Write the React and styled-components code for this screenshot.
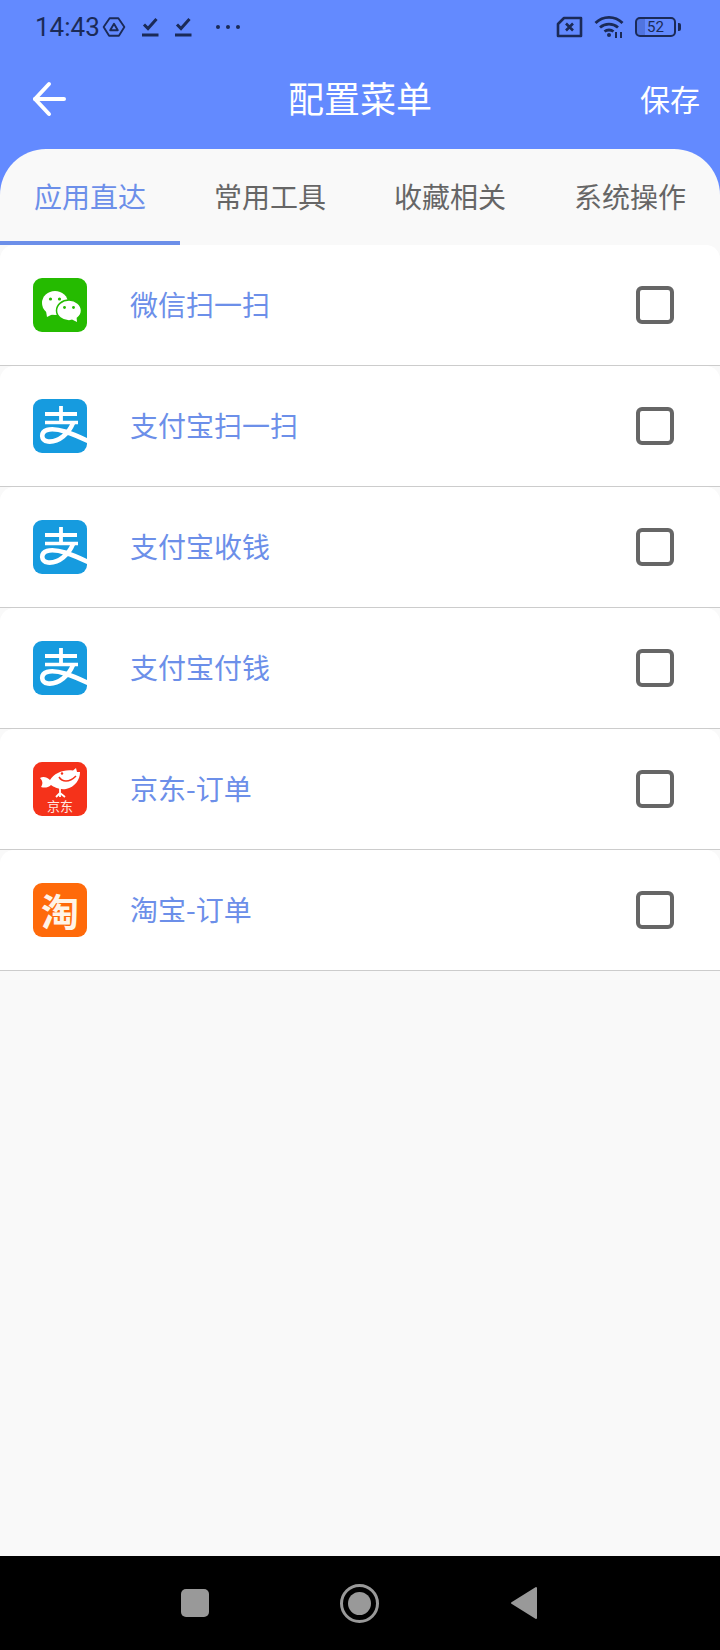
import React from "react";
import styled, { createGlobalStyle } from "styled-components";

const GlobalStyle = createGlobalStyle`
  html, body {
    margin: 0;
    padding: 0;
    background: #000;
  }
  * {
    box-sizing: border-box;
  }
`;

const cjk = `"Noto Sans CJK SC", "Noto Sans", sans-serif`;

const Page = styled.div`
  width: 720px;
  height: 1650px;
  display: flex;
  flex-direction: column;
  background: #638aff;
  font-family: ${cjk};
  overflow: hidden;
`;

const StatusBar = styled.div`
  height: 54px;
  flex-shrink: 0;
  padding: 0 44px 0 35px;
  display: flex;
  align-items: center;
  color: #1b2a57;

  svg {
    display: block;
    flex-shrink: 0;
  }
`;

const Clock = styled.span`
  font-family: Roboto, sans-serif;
  font-size: 26px;
  margin-right: 2px;
`;

const StatusLeft = styled.div`
  display: flex;
  align-items: center;
  gap: 15px;
  flex: 1;
`;

const StatusGroup = styled.div`
  display: flex;
  align-items: center;
  gap: ${(p) => p.$gap}px;
`;

const Battery = styled.div`
  width: 41px;
  height: 20px;
  border: 2px solid #1b2a57;
  border-radius: 5px;
  font-family: Roboto, sans-serif;
  font-size: 15px;
  line-height: 16px;
  text-align: center;
  position: relative;
  background: linear-gradient(90deg, #5074e0 0, #5074e0 8px, transparent 8px);

  &::after {
    content: "";
    position: absolute;
    right: -7px;
    top: 4px;
    width: 3px;
    height: 8px;
    border-radius: 0 2px 2px 0;
    background: #1b2a57;
  }
`;

const Header = styled.div`
  height: 95px;
  flex-shrink: 0;
  padding: 0 20px 6px 32px;
  display: grid;
  grid-template-columns: 78px 1fr 80px;
  align-items: center;
  color: #fff;
`;

const BackButton = styled.div`
  display: flex;
  align-items: center;
`;

const Title = styled.div`
  font-size: 36px;
  text-align: center;
  line-height: 1;
  padding: 0 10px 4px 0;
`;

const Save = styled.div`
  font-size: 30px;
  text-align: right;
  line-height: 1;
  padding-bottom: 2px;
`;

const Sheet = styled.div`
  flex: 1;
  background: #f9f9f9;
  border-radius: 46px 46px 0 0;
  display: flex;
  flex-direction: column;
`;

const Tabs = styled.div`
  height: 96px;
  flex-shrink: 0;
  display: grid;
  grid-template-columns: repeat(4, 180px);
`;

const Tab = styled.div`
  display: flex;
  align-items: center;
  justify-content: center;
  padding-top: 1px;
  font-size: 28px;
  color: ${(p) => (p.$active ? "#6c8fe9" : "#666")};
  border-bottom: 4px solid ${(p) => (p.$active ? "#6c8fe9" : "transparent")};
`;

const Row = styled.div`
  height: 121px;
  background: #fff;
  border-radius: 14px 14px 0 0;
  border-bottom: 1px solid #ccc;
  padding: 0 46px 0 33px;
  display: flex;
  align-items: center;
`;

const Logo = styled.div`
  width: 54px;
  height: 54px;
  flex-shrink: 0;
  border-radius: 9px;
  overflow: hidden;
  background: ${(p) => p.$bg};
  display: flex;
  align-items: center;
  justify-content: center;
  color: #fff;

  svg {
    display: block;
  }
`;

const TaobaoMark = styled.span`
  font-size: 38px;
  font-weight: 700;
  line-height: 1;
  color: #fff4e8;
`;

const JdWord = styled.text`
  font-family: ${cjk};
  font-size: 13px;
  fill: #ffe9e2;
`;

const RowLabel = styled.div`
  flex: 1;
  margin-left: 43px;
  padding-bottom: 2px;
  font-size: 28px;
  color: #6c8fe9;
  line-height: 1;
`;

const Check = styled.div`
  width: 38px;
  height: 38px;
  border: 4px solid #666;
  border-radius: 6px;
  background: #fff;
`;

const NavBar = styled.div`
  height: 94px;
  flex-shrink: 0;
  background: #000;
  padding-right: 2px;
  display: flex;
  align-items: center;
  justify-content: center;
  gap: 131px;
`;

const NavSquare = styled.div`
  width: 28px;
  height: 28px;
  border-radius: 5px;
  background: #999;
`;

const NavCircle = styled.div`
  width: 39px;
  height: 39px;
  border-radius: 50%;
  border: 3px solid #999;
  display: flex;
  align-items: center;
  justify-content: center;

  &::before {
    content: "";
    width: 23px;
    height: 23px;
    border-radius: 50%;
    background: #999;
  }
`;

const WechatLogo = () => (
  <svg width="54" height="54" viewBox="0 0 54 54">
    <ellipse cx="22" cy="25" rx="13" ry="12" fill="#fff" />
    <path d="M13 33 L14 39 L22 35 Z" fill="#fff" />
    <ellipse cx="36" cy="32.5" rx="12.5" ry="10.5" fill="#fff" stroke="#25bb00" strokeWidth="1.5" />
    <path d="M39 41.5 L44 44 L43.5 38.5 Z" fill="#fff" />
    <circle cx="17.5" cy="21" r="1.6" fill="#25bb00" />
    <circle cx="26.5" cy="21" r="1.6" fill="#25bb00" />
    <circle cx="31.5" cy="29.5" r="1.4" fill="#25bb00" />
    <circle cx="40.5" cy="29.5" r="1.4" fill="#25bb00" />
  </svg>
);

const AlipayLogo = () => (
  <svg width="54" height="54" viewBox="0 0 54 54" fill="none" stroke="#fff" strokeWidth="3.8">
    <path d="M12 15 H44" />
    <path d="M28 7 V23" />
    <path d="M12 23.5 H45" strokeWidth="3.4" />
    <path d="M40 24 C36 34 26 43.5 15 42.5 C7.5 41.5 7.5 33 14 31 C24 28 40 35 56 42.5" strokeWidth="4.6" />
  </svg>
);

const JdLogo = () => (
  <svg width="54" height="54" viewBox="0 0 54 54">
    <path
      d="M7 16 C10 14 14 15 17 18 C21 11 31 7 40 8.5 L43 6 L44 10 L47 10 C47 18 42 25 33 27 C26 28 21 25 18 23 C15 26 11 26 8 25 C10 22 10 19 7 16 Z"
      fill="#fff"
    />
    <path d="M27 26 V31 M27 31 L23 35 M27 31 L32 35 M27 31 V35" stroke="#fff" strokeWidth="1.8" fill="none" />
    <path d="M26 15 C29 20 36 21 43 14" stroke="#f5321a" strokeWidth="1.5" fill="none" />
    <circle cx="29" cy="11.5" r="1.2" fill="#f5321a" />
    <JdWord x="14" y="48.5">京东</JdWord>
  </svg>
);

const items = [
  { key: "wx", label: "微信扫一扫", logo: "wechat" },
  { key: "ali-scan", label: "支付宝扫一扫", logo: "alipay" },
  { key: "ali-get", label: "支付宝收钱", logo: "alipay" },
  { key: "ali-pay", label: "支付宝付钱", logo: "alipay" },
  { key: "jd", label: "京东-订单", logo: "jd" },
  { key: "tb", label: "淘宝-订单", logo: "taobao" },
];

const logos = {
  wechat: (
    <Logo $bg="#25bb00">
      <WechatLogo />
    </Logo>
  ),
  alipay: (
    <Logo $bg="#169bdf">
      <AlipayLogo />
    </Logo>
  ),
  jd: (
    <Logo $bg="#f5321a">
      <JdLogo />
    </Logo>
  ),
  taobao: (
    <Logo $bg="#ff6a0a">
      <TaobaoMark>淘</TaobaoMark>
    </Logo>
  ),
};

const tabs = ["应用直达", "常用工具", "收藏相关", "系统操作"];

const TaskCheck = () => (
  <svg width="18" height="20" viewBox="0 0 18 20" fill="none" stroke="#1b2a57">
    <path d="M3 7.5 L7 11.5 L15.5 2" strokeWidth="3" />
    <path d="M1 18 H17.5" strokeWidth="3" />
  </svg>
);

export default function App() {
  return (
    <Page>
      <GlobalStyle />
      <StatusBar>
        <StatusLeft>
          <StatusGroup $gap={0}>
            <Clock>14:43</Clock>
            <svg width="24" height="22" viewBox="0 0 22 20" fill="none" stroke="#1b2a57" strokeWidth="1.7">
              <path d="M7 2 H15 L20.5 10 L15.5 18 H6.5 L1.5 10 Z" strokeLinejoin="round" />
              <path d="M11 7 L14.5 13 H7.5 Z" strokeLinejoin="round" />
            </svg>
          </StatusGroup>
          <TaskCheck />
          <TaskCheck />
          <svg width="26" height="6" viewBox="0 0 26 6" fill="#1b2a57" style={{ marginLeft: 8 }}>
            <circle cx="3" cy="3" r="2" />
            <circle cx="13" cy="3" r="2" />
            <circle cx="23" cy="3" r="2" />
          </svg>
        </StatusLeft>
        <StatusGroup $gap={11}>
          <svg width="27" height="22" viewBox="0 0 27 22" fill="none" stroke="#1b2a57">
            <path d="M8 2 H25 V20 H2 V8 Z" strokeWidth="2.6" strokeLinejoin="round" />
            <path d="M10 7.5 L17 14.5 M17 7.5 L10 14.5" strokeWidth="2.6" />
          </svg>
          <svg width="30" height="24" viewBox="0 0 30 24" fill="none" stroke="#1b2a57" strokeWidth="2.8">
            <path d="M1.5 8 C9 0.5 21 0.5 28.5 8" />
            <path d="M6 12.5 C11 8 19 8 24 12.5" />
            <path d="M10.5 16.5 C13 14.5 17 14.5 19.5 16.5" />
            <circle cx="15" cy="20" r="2" fill="#1b2a57" stroke="none" />
            <path d="M22 23 V17 M27 23 V17" strokeWidth="2" />
          </svg>
          <Battery>52</Battery>
        </StatusGroup>
      </StatusBar>
      <Header>
        <BackButton>
          <svg width="34" height="36" viewBox="0 0 34 36" fill="none" stroke="#fff" strokeWidth="4" strokeLinecap="round" strokeLinejoin="round">
            <path d="M32 18 H3" />
            <path d="M17 3 L3 18 L17 33" />
          </svg>
        </BackButton>
        <Title>配置菜单</Title>
        <Save>保存</Save>
      </Header>
      <Sheet>
        <Tabs>
          {tabs.map((t, i) => (
            <Tab key={t} $active={i === 0}>
              {t}
            </Tab>
          ))}
        </Tabs>
        {items.map((item) => (
          <Row key={item.key}>
            {logos[item.logo]}
            <RowLabel>{item.label}</RowLabel>
            <Check />
          </Row>
        ))}
      </Sheet>
      <NavBar>
        <NavSquare />
        <NavCircle />
        <svg width="28" height="34" viewBox="0 0 28 34">
          <path d="M26 2 V32 L2 17 Z" fill="#999" stroke="#999" strokeWidth="2" strokeLinejoin="round" />
        </svg>
      </NavBar>
    </Page>
  );
}
